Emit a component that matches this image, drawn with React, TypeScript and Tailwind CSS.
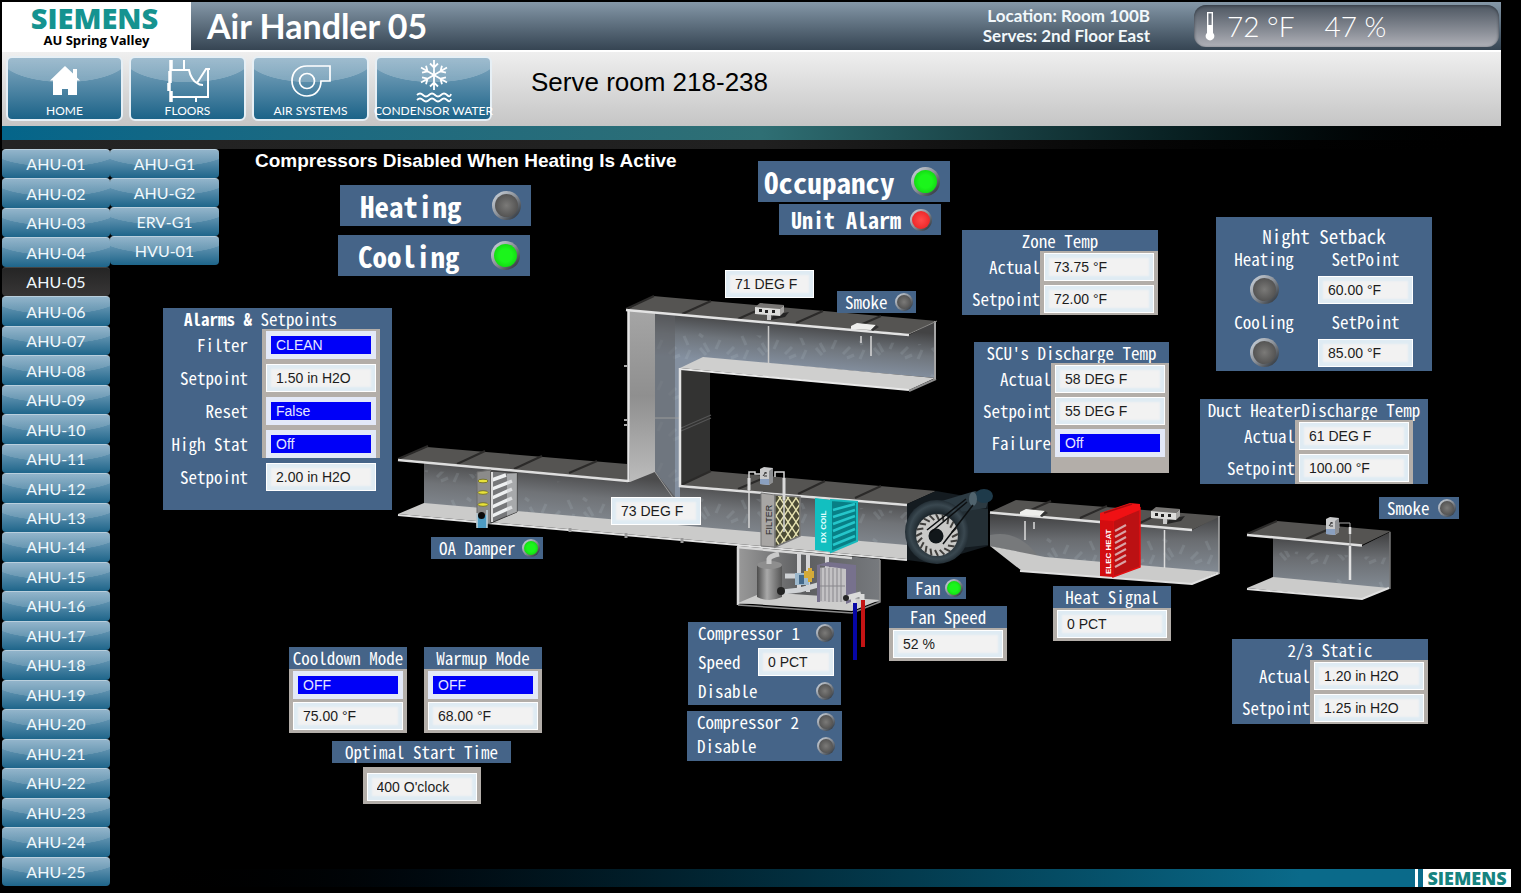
import { useId, useState, type ReactNode } from 'react'
import clsx from 'clsx'

const GOTHIC = "font-['Lato','Open_Sans',sans-serif]"
const UNITS = Array.from({ length: 25 }, (_, i) => `AHU-${String(i + 1).padStart(2, '0')}`)
const EXTRA_UNITS = ['AHU-G1', 'AHU-G2', 'ERV-G1', 'HVU-01']

/* ---------- toolbar icons ---------- */

function HomeIcon() {
  return (
    <svg viewBox="0 0 30 32" className="h-8 w-[30px]" fill="#fff" aria-hidden="true">
      <path d="M15 1 L23 8.5 V4 H27 V12.5 L30 15.5 H27 V30 H18 V24 H12 V30 H3 V15.5 H0 Z" />
    </svg>
  )
}

function FloorsIcon() {
  return (
    <svg viewBox="0 0 44 44" className="h-11 w-11" fill="none" stroke="#fff" strokeWidth="2" aria-hidden="true">
      <path d="M5 1 V12 M4 12 V24 M3 24 V32 M5 32 V43" strokeWidth="3.5" />
      <path d="M5 11 H23 C24 17 28 23 31 24 Q33 26 37 26 M18 1 V11 M31 24 L40 10 H44 M42 10 V38 H5 M30 38 V43" strokeWidth="2" />
    </svg>
  )
}

function BlowerIcon() {
  return (
    <svg viewBox="0 0 42 34" className="h-[34px] w-[42px]" fill="none" stroke="#fff" strokeWidth="1.7" aria-hidden="true">
      <path d="M17 2 H40 V17 H31 C31 26 25 32 17 32 C8 32 2 25 2 17 C2 8 8 2 17 2 Z" />
      <circle cx="17" cy="17" r="7.5" />
    </svg>
  )
}

function SnowIcon() {
  return (
    <svg viewBox="0 0 36 44" className="h-11 w-9" fill="none" stroke="#fff" strokeWidth="1.8" aria-hidden="true">
      {[0, 60, 120, 180, 240, 300].map((angle) => (
        <path key={angle} d="M18 16 V1 M14 4.5 L18 8.5 L22 4.5" transform={`rotate(${angle} 18 16)`} />
      ))}
      <path d="M1 36 Q4 33 7 36 T13 36 T19 36 T25 36 T31 36 T35 35 M1 41 Q4 38 7 41 T13 41 T19 41 T25 41 T31 41 T35 40" />
    </svg>
  )
}

function ThermometerIcon() {
  return (
    <svg viewBox="0 0 10 30" className="h-[30px] w-[10px]" aria-hidden="true">
      <rect x="2.7" y="1.7" width="4.6" height="22" fill="none" stroke="#fff" strokeWidth="1.4" />
      <rect x="3" y="14" width="4" height="10" fill="#fff" />
      <circle cx="5" cy="25" r="4.4" fill="#fff" />
    </svg>
  )
}

const TOOLS = [
  { label: 'HOME', icon: <HomeIcon /> },
  { label: 'FLOORS', icon: <FloorsIcon /> },
  { label: 'AIR SYSTEMS', icon: <BlowerIcon /> },
  { label: 'CONDENSOR WATER', icon: <SnowIcon /> },
]

/* ---------- small parts ---------- */

type LedColor = 'off' | 'green' | 'red'

function Led({ color = 'off', size = 'sm', label }: { color?: LedColor; size?: 'sm' | 'md' | 'lg'; label: string }) {
  return (
    <span
      role="img"
      aria-label={`${label} ${color}`}
      className={clsx(
        'block shrink-0 rounded-full bg-linear-to-br from-[#d5dde6] via-[#8a8f96] to-[#20262c]',
        size === 'sm' && 'size-[18px] p-[2px]',
        size === 'md' && 'size-[22px] p-[2px]',
        size === 'lg' && 'size-[29px] p-[3px]',
      )}
    >
      <span
        className={clsx(
          'block size-full rounded-full',
          color === 'off' && 'bg-radial from-[#7b7a78] to-[#454545]',
          color === 'green' && 'bg-radial from-[#1bf51b] from-40% to-[#0bc40b]',
          color === 'red' && 'bg-radial from-[#ff4a4a] to-[#e80f16]',
        )}
      />
    </span>
  )
}

function Field({ id, value, label, blue, className = 'w-[110px]' }: { id?: string; value: string; label?: string; blue?: boolean; className?: string }) {
  return (
    <input
      id={id}
      aria-label={label}
      defaultValue={value}
      className={clsx(
        "block h-7 shrink-0 font-['Liberation_Sans',Arial,sans-serif] text-sm outline-none",
        blue
          ? 'border-[5px] border-[#e3e9f8] bg-[#0000f8] px-[5px] text-[#e6e6ff]'
          : 'border border-white bg-[#f2f2f2] px-[9px] text-[#1c1c1c] shadow-[inset_0_0_2px_4px_#dfebf3]',
        className,
      )}
    />
  )
}

type Row = { label: string; value: string; blue?: boolean }

function Readings({ title, rows, labels, tail, children }: { title: ReactNode; rows: Row[]; labels: string; tail?: string; children?: ReactNode }) {
  const id = useId()
  return (
    <>
      <h2 className="h-[21px] text-center leading-[21px]">{title}</h2>
      <div className="flex">
        <div className={clsx('flex shrink-0 flex-col text-right', labels)}>
          {rows.map((row, i) => (
            <label key={i} htmlFor={`${id}-${i}`} className="h-8 leading-8">
              {row.label}
            </label>
          ))}
        </div>
        <div className={clsx('flex w-[118px] flex-col gap-1 bg-[#b3aea9] px-1 pt-[2px]', tail ?? 'pb-[2px]')}>
          {rows.map((row, i) => (
            <Field key={i} id={`${id}-${i}`} value={row.value} blue={row.blue} />
          ))}
        </div>
        {children}
      </div>
    </>
  )
}

function Card({ title, fields }: { title: string; fields: { value: string; blue?: boolean }[] }) {
  return (
    <>
      <h2 className="h-[22px] text-center leading-[22px]">{title}</h2>
      <div className="flex flex-col gap-[3px] bg-[#b3aea9] px-1 pt-[2px] pb-[3px]">
        {fields.map((f, i) => (
          <Field key={i} value={f.value} blue={f.blue} label={`${title} ${i + 1}`} />
        ))}
      </div>
    </>
  )
}

function Node({ at, className, children }: { at: string; className?: string; children: ReactNode }) {
  return <div className={clsx('absolute whitespace-nowrap bg-[#456488] text-white', at, className)}>{children}</div>
}

function Tag({ at, label, color }: { at: string; label: string; color?: LedColor }) {
  return (
    <Node at={at} className="flex h-[22px] items-center justify-between pr-[3px] pl-[8px]">
      <span>{label}</span>
      <Led label={label} color={color} />
    </Node>
  )
}

function AlarmsPanel() {
  const id = useId()
  const rows: Row[] = [
    { label: 'Filter', value: 'CLEAN', blue: true },
    { label: 'Setpoint', value: '1.50 in H2O' },
    { label: 'Reset', value: 'False', blue: true },
    { label: 'High Stat', value: 'Off', blue: true },
    { label: 'Setpoint', value: '2.00 in H2O' },
  ]
  return (
    <Node at="left-[53px] top-[159px]" className="w-[229px] pb-[19px]">
      <h2 className="h-[21px] pl-[21px] leading-[21px]">
        <b>Alarms &amp;</b> Setpoints
      </h2>
      <div className="flex">
        <div className="flex w-[85px] flex-col gap-[5px] pt-[2px] text-right">
          {rows.map((row, i) => (
            <label key={i} htmlFor={`${id}-${i}`} className="h-7 leading-7">
              {row.label}
            </label>
          ))}
        </div>
        <div className="ml-[14px] flex w-[118px] flex-col gap-[5px] bg-linear-to-b from-[#b3aea9] from-[129px] to-[#456488] to-[129px] px-1 pt-[2px]">
          {rows.map((row, i) => (
            <Field key={i} id={`${id}-${i}`} value={row.value} blue={row.blue} />
          ))}
        </div>
      </div>
    </Node>
  )
}

function NightSetback() {
  const id = useId()
  const rows = [
    { label: 'Heating', value: '60.00 °F' },
    { label: 'Cooling', value: '85.00 °F' },
  ]
  return (
    <Node at="left-[1106px] top-[68px]" className="w-[216px] pt-2 pb-1">
      <h2 className="text-center text-[19px] leading-[22px]">Night Setback</h2>
      <div className="flex flex-col gap-[6px]">
        {rows.map((row) => (
          <div key={row.label} className="flex justify-between pr-[19px] pl-[14px]">
            <div className="flex w-[68px] flex-col items-center gap-1">
              <span className="leading-6">{row.label}</span>
              <Led label={row.label} size="lg" />
            </div>
            <div className="flex w-[95px] flex-col items-center gap-[5px]">
              <label htmlFor={id + row.label} className="leading-6">
                SetPoint
              </label>
              <Field id={id + row.label} value={row.value} className="w-[95px]" />
            </div>
          </div>
        ))}
      </div>
    </Node>
  )
}

/* ---------- duct drawing ---------- */

function Seams({ lines }: { lines: number[][] }) {
  return (
    <g stroke="#2b2a29" strokeWidth="2">
      {lines.map(([a, b, c, d], i) => (
        <path key={i} d={`M${a} ${b} L${c} ${d}`} />
      ))}
    </g>
  )
}

function SensorBox({ x, y }: { x: number; y: number }) {
  return (
    <g transform={`translate(${x} ${y})`}>
      <path d="M18 12 L34 9 L30 14 L16 17 Z" fill="#252525" />
      <path d="M0 4 L5 0 L29 2 L25 6 Z" fill="#777573" />
      <path d="M0 4 L25 6 V13 L0 11 Z" fill="#dddddb" />
      <path d="M25 6 L29 2 V9 L25 13 Z" fill="#a5a4a2" />
      <path d="M12 12 H16 V17 H12 Z" fill="#c9c9c9" />
      <path d="M4 6 h3 v3 h-3 Z M10 7 h3 v3 h-3 Z M17 7 h3 v3 h-3 Z" fill="#222" />
    </g>
  )
}

function SmokeHead({ x, y }: { x: number; y: number }) {
  return (
    <g transform={`translate(${x} ${y})`}>
      <path d="M0 3 L6 0 L25 2 L20 7 L0 6 Z" fill="#eeeeec" />
      <path d="M20 7 L25 2 L28 4 L22 8 Z" fill="#333" />
    </g>
  )
}

function PressureBox({ x, y }: { x: number; y: number }) {
  return (
    <g transform={`translate(${x} ${y})`}>
      <path d="M0 2 L4 0 L13 1 L13 15 L9 18 L0 17 Z" fill="#c9cacb" />
      <path d="M9 4 L13 1 V15 L9 18 Z" fill="#8d8f92" />
      <path d="M0 12 H9 V18 L0 17 Z" fill="#8aa0c0" />
      <path d="M3 9 L6 5 M4 6 h3 M4 9 h3" stroke="#333" strokeWidth="1" />
    </g>
  )
}

function Ductwork() {
  const blades = Array.from({ length: 20 }, (_, i) => i * 18)
  return (
    <svg viewBox="390 285 1020 385" className="absolute top-[136px] left-[280px] h-[385px] w-[1020px]" role="img" aria-label="Air handler ductwork">
      <defs>
        <linearGradient id="wall" x1="0" y1="0" x2="0" y2="1">
          <stop offset="0" stopColor="#3e3e3f" />
          <stop offset=".45" stopColor="#6a6d71" />
          <stop offset="1" stopColor="#838b94" />
        </linearGradient>
        <linearGradient id="wallMain" gradientUnits="userSpaceOnUse" x1="660" y1="480" x2="656" y2="526">
          <stop offset="0" stopColor="#4b4b4c" />
          <stop offset=".5" stopColor="#707377" />
          <stop offset="1" stopColor="#80868d" />
        </linearGradient>
        <linearGradient id="wallTop" gradientUnits="userSpaceOnUse" x1="800" y1="322" x2="796" y2="368">
          <stop offset="0" stopColor="#434344" />
          <stop offset=".5" stopColor="#6f757c" />
          <stop offset="1" stopColor="#8490a0" />
        </linearGradient>
        <linearGradient id="face" x1="0" y1="0" x2="0" y2="1">
          <stop offset="0" stopColor="#a5a5a5" />
          <stop offset=".5" stopColor="#8f8f8f" />
          <stop offset="1" stopColor="#bcbcbc" />
        </linearGradient>
        <linearGradient id="tank" x1="0" y1="0" x2="1" y2="0">
          <stop offset="0" stopColor="#4c4c4c" />
          <stop offset=".4" stopColor="#a9a9a9" />
          <stop offset="1" stopColor="#555" />
        </linearGradient>
        <linearGradient id="cabinet" x1="0" y1="0" x2="1" y2="0">
          <stop offset="0" stopColor="#989898" />
          <stop offset=".45" stopColor="#5c5d5f" />
          <stop offset="1" stopColor="#777a7e" />
        </linearGradient>
        <radialGradient id="housing">
          <stop offset=".6" stopColor="#1d272d" />
          <stop offset=".85" stopColor="#3a4850" />
          <stop offset="1" stopColor="#232e35" />
        </radialGradient>
        <pattern id="mesh" width="8" height="12" patternUnits="userSpaceOnUse">
          <rect width="8" height="12" fill="#4a4a35" />
          <path d="M0 0 L8 12 M8 0 L0 12" stroke="#e6e2b0" strokeWidth="1.5" />
        </pattern>
        <pattern id="streaks" width="58" height="41" patternUnits="userSpaceOnUse">
          <path d="M4 20 L10 27 M8 15 L13 24 M24 12 L20 21 M31 26 L38 19 M35 30 L42 27 M3 6 L7 9 M46 8 L50 17 M52 22 L48 31" stroke="#c3ced8" strokeOpacity=".14" strokeWidth="3" fill="none" />
        </pattern>
      </defs>

      {/* upper duct and riser */}
      <path d="M655 312 L909 335 L936 321 V378 L703 358 L680 369 V502 L655 500 Z" fill="url(#wallTop)" />
      <path d="M655 330 L936 345 V378 L703 358 L680 369 V502 L655 500 Z" fill="url(#streaks)" />
      <path d="M655 312 L675 314 V502 H655 Z" fill="#5f6165" fillOpacity=".55" />
      <path d="M681 370 L710 373 V471 L681 485 Z" fill="#333332" />
      <path d="M681 431 L711 418 M681 428 L711 415" stroke="#555" strokeWidth="1.2" />
      <path d="M680 368 L703 357 L935 378 L909 390 Z" fill="#cfcfce" />
      <path d="M680 369 L909 390" stroke="#e9e9e9" strokeWidth="2" />
      <path d="M909 391 L936 379" stroke="#8d8d8d" strokeWidth="2" />
      <path d="M626 310 L653 296 L937 321 L909 334 Z" fill="#555452" />
      <Seams lines={[[626, 309, 654, 296], [682, 314, 711, 301], [738, 319, 767, 306], [796, 323, 823, 311], [853, 328, 881, 316]]} />
      <path d="M935 321 V379" stroke="#a5a5a5" strokeWidth="2" />
      <path d="M909 334 L937 321" stroke="#8a8987" strokeWidth="1" />

      {/* main run */}
      <path d="M424 461 L627 480 L655 472 L680 503 V485 L907 504 V546 L424 504 Z" fill="url(#wallMain)" />
      <path d="M424 470 L907 512 V546 L424 504 Z" fill="url(#streaks)" />
      <path d="M655 472 L676 502 M655 418 H680" stroke="#9b9b9b" strokeWidth="1" />
      <path d="M398 514 L424 503 L907 545 V559 Z" fill="#cbcbca" />
      <path d="M398 515 L907 560" stroke="#e2e2e2" strokeWidth="2" />
      <path d="M570 528 v4 M626 533 v5 M682 538 v5" stroke="#999" strokeWidth="3" />
      <path d="M398 459 L427 447 L627 464 V480 Z" fill="#555452" />
      <Seams lines={[[398, 459, 428, 446], [457, 464, 485, 451], [514, 469, 542, 456], [569, 473, 597, 461]]} />
      <path d="M398 460 L628 481" stroke="#dedede" strokeWidth="2.5" />
      <path d="M680 485 L710 471 L936 491 L907 504 Z" fill="#555452" />
      <Seams lines={[[681, 485, 711, 471], [738, 489, 766, 477], [798, 494, 825, 481], [855, 498, 881, 486]]} />
      <path d="M679 486 L907 505" stroke="#dedede" strokeWidth="2.5" />
      <path d="M628 310 L655 313 V472 L630 482 Z" fill="url(#face)" />
      <path d="M628.500 310 V482 M680 368 V487" stroke="#e3e3e3" strokeWidth="2.500" />
      <path d="M626 310 L909 335" stroke="#e3e3e3" strokeWidth="2.500" />
      <path d="M624 366 h3 M624 420 h3 M624 425 h3" stroke="#aaa" strokeWidth="2" />

      <SensorBox x={755} y={303} />
      <path d="M768.500 326 V363" stroke="#c9c9c9" strokeWidth="1.500" />
      <SmokeHead x={851} y={323} />
      <path d="M861 336 V343 M871 336 V356" stroke="#d8d8d8" strokeWidth="1.500" />

      {/* outside air damper */}
      <path d="M477 472 L491 470 V523 L477 526 Z" fill="#8b8b8a" stroke="#6b6b6a" />
      <path d="M491 471 L517 473 V512 L491 523 Z" fill="#77787a" stroke="#3a3a3a" />
      <path d="M492 480 L506 475 M492 489 L512 481 M492 498 L512 489 M492 507 L512 498 M492 516 L512 507" stroke="#eef0f1" strokeWidth="3.5" />
      <path d="M507 474 L517 473 V512 L507 516 Z" fill="#cfd1d3" fillOpacity=".55" />
      <path d="M492 472 V522" stroke="#dcdcdc" strokeWidth="2" />
      <g fill="#e8e23a" stroke="#6b6720" strokeWidth=".8">
        <ellipse cx="483" cy="481" rx="5" ry="1.800" />
        <ellipse cx="483" cy="492.500" rx="5" ry="1.800" />
        <ellipse cx="483" cy="504.500" rx="5" ry="1.800" />
      </g>
      <path d="M477 515 H487 V528 H477 Z" fill="#4d9cc4" />
      <path d="M477 513 V528 M487 510 V528" stroke="#c2d4dc" strokeWidth="1.500" />
      <circle cx="481.500" cy="515.500" r="3.500" fill="#0b0b0b" />

      {/* filter */}
      <path d="M761 493 L775 495 V547 L761 546 Z" fill="#a8a6a4" stroke="#777" />
      <path d="M775 495 L800 497 V536 L775 547 Z" fill="url(#mesh)" stroke="#777" strokeWidth="1.500" />
      <text transform="translate(772 535) rotate(-90)" fontFamily="Liberation Sans" fontSize="9" fill="#2a2a2a">FILTER</text>

      {/* differential pressure switch */}
      <path d="M749 528 V472 H755 V474 H762 M784 532 V478 M775 477 V472 H784 V478" stroke="#d6d6d6" strokeWidth="1.500" fill="none" />
      <path d="M784 478 V500 M749 478 V490" stroke="#dadada" strokeWidth="3" />
      <PressureBox x={760} y={467} />

      {/* cooling coil */}
      <path d="M815 498 L831 500 V552 L815 550 Z" fill="#12bfc0" />
      <path d="M831 500 L857 502 V541 L831 552 Z" fill="#087f86" stroke="#18b9bc" strokeWidth="2" />
      <path d="M833 510 L855 504 M833 517 L855 510 M833 524 L855 516 M833 531 L855 522 M833 538 L855 529 M833 545 L855 536" stroke="#25c6ca" strokeWidth="2.500" />
      <text transform="translate(826 543) rotate(-90)" fontFamily="Liberation Sans" fontWeight="bold" fontSize="8" fill="#e2ffff">DX COIL</text>

      {/* supply fan */}
      <path d="M907 504 L936 491 L988 500 V546 L930 563 L907 560 Z" fill="#141b20" />
      <path d="M950 509 L988 509 V545 L960 548 Z" fill="#242f35" />
      <path d="M935 503 L975 491 L990 496 L986 508 L960 512 Z" fill="#2c3a42" />
      <ellipse cx="984" cy="496" rx="9" ry="7" fill="#1e3a4a" />
      <ellipse cx="973" cy="499" rx="4" ry="7" fill="#50636d" />
      <circle cx="937" cy="532" r="32" fill="url(#housing)" />
      <circle cx="937" cy="535" r="21" fill="#c9c9c7" />
      <g stroke="#3f3e3c" strokeWidth="2">
        {blades.map((a) => (
          <path key={a} d="M936 514 L939 520" transform={`rotate(${a} 937 535)`} />
        ))}
      </g>
      <circle cx="936" cy="536" r="7.500" fill="#11171a" />
      <path d="M927 530 L966 499 M943 544 L973 505 M930 533 L967 502" stroke="#0c0f11" strokeWidth="1.500" />

      {/* condensing section */}
      <path d="M739 547 L880 559 V602 L739 604 Z" fill="url(#cabinet)" />
      <path d="M738 603 L764 592 L880 600 L852 611 Z" fill="#cdcdcc" />
      <path d="M738 547 V605 M737 547 L852 558" stroke="#d8d8d8" strokeWidth="2.500" />
      <path d="M738 605 L852 613 L880 602 V560" stroke="#8b8b8b" strokeWidth="1.500" fill="none" />
      <path d="M799 553 V592 M808 554 V592 M827 556 V568" stroke="#d4d4d6" strokeWidth="4" />
      <path d="M757 565 Q769 558 782 565 V597 Q769 603 757 597 Z" fill="url(#tank)" />
      <ellipse cx="769.500" cy="565" rx="12.500" ry="4" fill="#8e8e8e" />
      <path d="M769 564 V559 Q770 556 779 554" stroke="#c9c9c9" strokeWidth="5" fill="none" />
      <path d="M782 592 L800 590 L818 585 M785 576 H808" stroke="#cfd2d5" strokeWidth="5" fill="none" />
      <circle cx="781" cy="591" r="4" fill="#222" />
      <path d="M795 573 h14 v12 h-14 Z" fill="#9cb8cd" />
      <path d="M799 575 h5 v9 h-5 Z" fill="#43698b" />
      <path d="M804 571 h10 v7 h-10 Z M808 568 h4 v14 h-4 Z" fill="#d4aa39" />
      <path d="M817 568 L846 566 V602 L817 602 Z" fill="#c3c2c4" />
      <path d="M821 568 V601 M825 568 V601 M829 568 V602 M833 568 V602 M837 568 V602 M841 568 V602 M818 586 H845" stroke="#88878c" strokeWidth="1" />
      <path d="M846 567 L856 565 V600 L846 604 Z M817 565 h3 v37 h-3 Z M817 565 L828 562 L856 565 L846 569 Z" fill="#77718d" />
      <path d="M846 598 L861 594 M853 596 L854 605 M862 594 V600" stroke="#dadada" strokeWidth="5" />
      <circle cx="846" cy="598" r="3" fill="#252525" />
      <path d="M855 603 V660" stroke="#0606a6" strokeWidth="4" />
      <path d="M863 600 V647" stroke="#c41414" strokeWidth="4" />

      {/* electric heat section */}
      <path d="M990 513 L1192 530 L1219 516 V573 L1045 558 L990 546 Z" fill="url(#wall)" />
      <path d="M1046 524 L1219 540 V573 L1046 558 Z" fill="url(#streaks)" />
      <path d="M990 546 V535 Q1018 529 1038 556 Z" fill="#77797b" />
      <path d="M990 546 L1045 557 L1219 572 L1192 584 L1022 571 Z" fill="#cbcbca" />
      <path d="M1020 571 L1192 584 L1219 573" stroke="#e0e0e0" strokeWidth="2" fill="none" />
      <path d="M990 512 L1016 500 L1221 516 L1192 530 Z" fill="#555452" />
      <Seams lines={[[1024, 513, 1051, 501], [1080, 518, 1107, 506], [1140, 523, 1165, 511]]} />
      <path d="M990 512.500 L1192 530" stroke="#e0e0e0" strokeWidth="2.500" />
      <path d="M1219 516 V574" stroke="#aaa" strokeWidth="1.500" />
      <SmokeHead x={1020} y={509} />
      <path d="M1025 521 V540 M1034 522 V529 M1164.500 530 V568" stroke="#dcdcdc" strokeWidth="1.500" />
      <SensorBox x={1151} y={507} />
      <path d="M1113 521 L1140 508 V567 L1113 577 Z" fill="#bb1113" stroke="#e30f12" strokeWidth="1.500" />
      <path d="M1115 531 L1126 525 M1115 537 L1126 531 M1115 543 L1126 537 M1115 549 L1126 543 M1115 555 L1126 549 M1115 561 L1126 555 M1115 567 L1126 561" stroke="#d9a3a5" strokeWidth="2" />
      <path d="M1100 514 L1113 517 V577 L1100 576 Z" fill="#d30d10" />
      <path d="M1100 513 L1130 503 L1140 504 V510 L1113 521 L1100 520 Z" fill="#f01114" />
      <path d="M1104 513 L1132 504" stroke="#a90c0e" strokeWidth="1.500" />
      <text transform="translate(1111 574) rotate(-90)" fontFamily="Liberation Sans" fontWeight="bold" fontSize="8" fill="#fff">ELEC HEAT</text>

      {/* remote duct */}
      <path d="M1273 538 L1362 546 L1390 532 V589 L1273 578 Z" fill="url(#wall)" />
      <path d="M1273 550 L1390 558 V589 L1273 578 Z" fill="url(#streaks)" />
      <path d="M1247 588 L1273 577 L1389 588 L1362 599 Z" fill="#cbcbca" />
      <path d="M1247 589 L1362 599 L1389 588" stroke="#e0e0e0" strokeWidth="2" fill="none" />
      <path d="M1247 534 L1277 521 L1391 531 L1362 545 Z" fill="#555452" />
      <Seams lines={[[1247, 534, 1277, 521], [1306, 539, 1334, 527]]} />
      <path d="M1247 535 L1362 545.500" stroke="#e0e0e0" strokeWidth="2.500" />
      <path d="M1390 532 V589" stroke="#777" strokeWidth="1.500" />
      <path d="M1339 528 V523 H1350 V580" stroke="#aaa" strokeWidth="1" fill="none" />
      <path d="M1350 527 V534 M1350 546 V580" stroke="#e2e2e2" strokeWidth="2.500" />
      <PressureBox x={1326} y={517} />
    </svg>
  )
}

/* ---------- page ---------- */

function UnitLink({ name, active, onSelect }: { name: string; active: boolean; onSelect: (n: string) => void }) {
  return (
    <a
      href={`#${name}`}
      aria-current={active ? 'page' : undefined}
      onClick={() => onSelect(name)}
      className={clsx(
        'flex h-full items-center justify-center rounded-sm border-t text-base leading-none text-[#f0f8fc]',
        GOTHIC,
        active
          ? 'border-[#444] bg-linear-to-b from-[#252525] to-[#383636]'
          : 'border-[#b9cfdd] bg-[radial-gradient(ellipse_60%_60%_at_50%_0,#ffffff24_98%,transparent),linear-gradient(#80a8c2,#1e658a)]',
      )}
    >
      {name}
    </a>
  )
}

export default function App() {
  const [unit, setUnit] = useState('AHU-05')
  return (
    <div className="flex min-h-screen min-w-[1480px] flex-col bg-black pt-[2px] pl-[2px]">
      <header>
        <div className="mr-5 flex h-12 items-center bg-linear-to-b from-[#8598a8] to-[#364553]">
          <div className="flex h-full w-[189px] flex-col items-center justify-center bg-white font-['Open_Sans','Noto_Sans',sans-serif] font-bold">
            <span className="pr-1 text-[29px] leading-7 font-extrabold text-[#159390]">SIEMENS</span>
            <span className="text-[13px] leading-4 text-black">AU Spring Valley</span>
          </div>
          <h1 className={clsx('flex-1 pl-4 text-[34px] leading-none font-bold text-white', GOTHIC)}>Air Handler 05</h1>
          <p className={clsx('mr-11 text-right text-[17px] leading-5 font-bold text-[#f2f8fb]', GOTHIC)}>
            Location: Room 100B
            <br />
            Serves: 2nd Floor East
          </p>
          <div className={clsx('mr-[2px] flex h-[42px] w-[305px] items-center rounded-xl bg-linear-to-b from-[#4e5762] to-[#b0b1b8] pl-[11px] text-[28px] font-light text-white shadow-[inset_0_1px_3px_#333b44]', GOTHIC)}>
            <ThermometerIcon />
            <span className="ml-3">72 °F</span>
            <span className="ml-[30px]">47 %</span>
          </div>
        </div>
        <div className="mr-5 flex h-[76px] items-start border-t-2 border-white bg-linear-to-b from-[#efefef] to-[#c5c5c5] pt-1 pl-1">
          <nav className="flex gap-[6px]" aria-label="Sections">
            {TOOLS.map((tool) => (
              <a
                key={tool.label}
                href={`#${tool.label}`}
                className={clsx(
                  'flex h-[65px] w-[117px] flex-col items-center justify-end rounded-md border-2 border-[#e6eff5] bg-[radial-gradient(ellipse_57%_40%_at_50%_0,#ffffff38_98%,transparent),linear-gradient(#83a9c1,#1c6388)] text-xs text-white',
                  GOTHIC,
                )}
              >
                <span className="flex h-11 items-center">{tool.icon}</span>
                <span className="leading-4 whitespace-nowrap">{tool.label}</span>
              </a>
            ))}
          </nav>
          <p className="ml-[39px] pt-2 font-['Liberation_Sans',Arial,sans-serif] text-[26px] leading-9 text-black">Serve room 218-238</p>
        </div>
        <div className="h-[14px] bg-linear-to-r from-[#04658a] via-[#2f6f74] via-50% to-black" />
        <div className="h-[9px] bg-linear-to-r from-[#242424] via-[#202020] to-black" />
      </header>

      <main className="flex flex-1">
        <nav aria-label="Air handlers" className="flex w-[108px] shrink-0 pb-[7px]">
          <ul className="grid flex-1 auto-rows-fr">
            {UNITS.map((name) => (
              <li key={name}>
                <UnitLink name={name} active={unit === name} onSelect={setUnit} />
              </li>
            ))}
          </ul>
        </nav>

        <section className="relative flex flex-1 flex-col justify-between pb-[6px] font-['Noto_Sans_Mono_CJK_JP','Liberation_Mono',monospace] text-[17px]">
          <nav aria-label="Other units" className="w-[109px]">
            <ul>
              {EXTRA_UNITS.map((name) => (
                <li key={name} className="h-[29px]">
                  <UnitLink name={name} active={unit === name} onSelect={setUnit} />
                </li>
              ))}
            </ul>
          </nav>

          <Ductwork />

          <p className="absolute top-0 left-[145px] font-['Liberation_Sans',Arial,sans-serif] text-[19px] leading-6 font-bold whitespace-nowrap text-white">
            Compressors Disabled When Heating Is Active
          </p>

          <Node at="left-[230px] top-[36px]" className="flex h-[41px] w-[191px] items-center justify-between pr-[10px] pl-5 text-[29px] font-bold">
            Heating <Led label="Heating" size="lg" />
          </Node>
          <Node at="left-[228px] top-[86px]" className="flex h-[41px] w-[192px] items-center justify-between pr-[10px] pl-5 text-[29px] font-bold">
            Cooling <Led label="Cooling" size="lg" color="green" />
          </Node>
          <Node at="left-[648px] top-[12px]" className="flex h-[41px] w-[192px] items-center justify-between pr-[10px] pl-[6px] text-[29px] font-bold">
            Occupancy <Led label="Occupancy" size="lg" color="green" />
          </Node>
          <Node at="left-[669px] top-[55px]" className="flex h-[31px] w-[162px] items-center justify-between pr-[9px] pl-3 text-[22px] font-bold">
            Unit Alarm <Led label="Unit Alarm" size="md" color="red" />
          </Node>

          <AlarmsPanel />

          <div className="absolute top-[121px] left-[615px]">
            <Field value="71 DEG F" label="Supply duct temperature" className="w-[89px]" />
          </div>
          <div className="absolute top-[348px] left-[501px]">
            <Field value="73 DEG F" label="Return duct temperature" className="w-[90px]" />
          </div>

          <Tag at="left-[727px] top-[142px] w-[79px]" label="Smoke" />
          <Tag at="left-[1269px] top-[348px] w-[80px]" label="Smoke" />
          <Tag at="left-[321px] top-[388px] w-[112px]" label="OA Damper" color="green" />
          <Tag at="left-[797px] top-[428px] w-[59px]" label="Fan" color="green" />

          <Node at="left-[852px] top-[81px]" className="w-[196px]">
            <Readings
              title="Zone Temp"
              labels="w-[78px]"
              rows={[
                { label: 'Actual', value: '73.75 °F' },
                { label: 'Setpoint', value: '72.00 °F' },
              ]}
            />
          </Node>
          <Node at="left-[864px] top-[193px]" className="w-[195px]">
            <Readings
              title="SCU's Discharge Temp"
              labels="w-[77px]"
              tail="pb-4"
              rows={[
                { label: 'Actual', value: '58 DEG F' },
                { label: 'Setpoint', value: '55 DEG F' },
                { label: 'Failure', value: 'Off', blue: true },
              ]}
            />
          </Node>
          <NightSetback />
          <Node at="left-[1090px] top-[250px]" className="w-[228px]">
            <Readings
              title="Duct HeaterDischarge Temp"
              labels="w-[95px]"
              rows={[
                { label: 'Actual', value: '61 DEG F' },
                { label: 'Setpoint', value: '100.00 °F' },
              ]}
            />
          </Node>
          <Node at="left-[1122px] top-[490px]" className="w-[196px]">
            <Readings
              title="2/3 Static"
              labels="w-[78px]"
              rows={[
                { label: 'Actual', value: '1.20 in H2O' },
                { label: 'Setpoint', value: '1.25 in H2O' },
              ]}
            />
          </Node>

          <Node at="left-[779px] top-[457px]" className="w-[118px]">
            <Card title="Fan Speed" fields={[{ value: '52 %' }]} />
          </Node>
          <Node at="left-[943px] top-[437px]" className="w-[118px]">
            <Card title="Heat Signal" fields={[{ value: '0 PCT' }]} />
          </Node>
          <Node at="left-[179px] top-[498px]" className="w-[118px]">
            <Card title="Cooldown Mode" fields={[{ value: 'OFF', blue: true }, { value: '75.00 °F' }]} />
          </Node>
          <Node at="left-[314px] top-[498px]" className="w-[118px]">
            <Card title="Warmup Mode" fields={[{ value: 'OFF', blue: true }, { value: '68.00 °F' }]} />
          </Node>

          <div className="absolute top-[592px] left-[222px] flex w-[179px] flex-col items-center gap-1 text-white">
            <label htmlFor="optimal-start" className="h-[22px] w-full bg-[#456488] text-center leading-[22px]">
              Optimal Start Time
            </label>
            <div className="bg-[#b3aea9] px-1 pt-[6px] pb-[3px]">
              <Field id="optimal-start" value="400 O'clock" />
            </div>
          </div>

          <Node at="left-[578px] top-[473px]" className="flex w-[153px] flex-col gap-[2px] pt-[2px] pr-[7px] pb-[5px] pl-[10px]">
            <div className="flex h-[18px] items-center justify-between">
              Compressor 1 <Led label="Compressor 1" />
            </div>
            <div className="flex items-center justify-between py-1">
              <label htmlFor="compressor-speed" className="leading-6">
                Speed
              </label>
              <Field id="compressor-speed" value="0 PCT" className="w-[76px]" />
            </div>
            <div className="flex h-[18px] items-center justify-between">
              Disable <Led label="Disable compressor 1" />
            </div>
          </Node>
          <Node at="left-[577px] top-[562px]" className="flex w-[155px] flex-col gap-[6px] pt-[2px] pr-[7px] pb-[6px] pl-[10px]">
            <div className="flex h-[18px] items-center justify-between">
              Compressor 2 <Led label="Compressor 2" />
            </div>
            <div className="flex h-[18px] items-center justify-between">
              Disable <Led label="Disable compressor 2" />
            </div>
          </Node>

          <footer className="mr-[10px] flex h-[18px] justify-end bg-linear-to-r from-black to-[#0a6a8a] to-85%">
            <span className="mr-[5px] w-[3px] bg-white" />
            <span className="flex w-[88px] items-center justify-center bg-white font-['Open_Sans','Noto_Sans',sans-serif] text-[18px] leading-none font-extrabold text-[#16837f]">
              SIEMENS
            </span>
          </footer>
        </section>
      </main>
    </div>
  )
}
